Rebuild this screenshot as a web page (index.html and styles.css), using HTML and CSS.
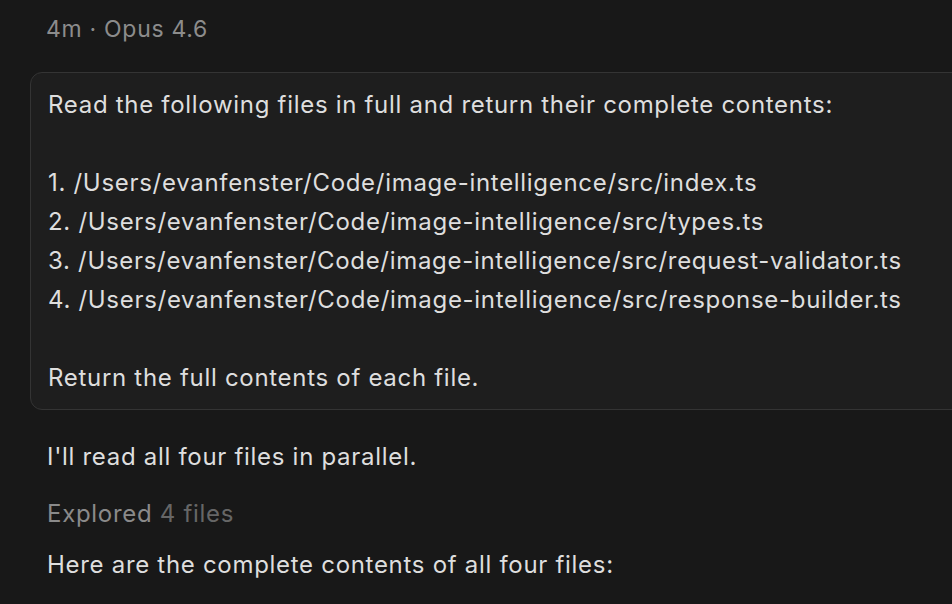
FILE: index.html
```html
<!DOCTYPE html>
<html lang="en">
<head>
<meta charset="utf-8">
<title>Chat</title>
<link rel="stylesheet" href="styles.css">
</head>
<body>
<main class="page">
  <div class="meta">4m · Opus 4.6</div>
  <section class="card">
    <p class="para">Read the following files in full and return their complete contents:</p>
    <ol class="list">
      <li>1. /Users/evanfenster/Code/image-intelligence/src/index.ts</li>
      <li>2. /Users/evanfenster/Code/image-intelligence/src/types.ts</li>
      <li>3. /Users/evanfenster/Code/image-intelligence/src/request-validator.ts</li>
      <li>4. /Users/evanfenster/Code/image-intelligence/src/response-builder.ts</li>
    </ol>
    <p class="para last">Return the full contents of each file.</p>
  </section>
  <p class="reply">I'll read all four files in parallel.</p>
  <div class="explored"><span class="ex-label">Explored</span> <span class="ex-count">4 files</span></div>
  <p class="reply next">Here are the complete contents of all four files:</p>
</main>
</body>
</html>
```
FILE: styles.css
```css
html, body {
  margin: 0;
  padding: 0;
  background: #181818;
}
body {
  width: 952px;
  height: 604px;
  overflow: hidden;
  font-family: Inter, "Noto Sans", "Liberation Sans", sans-serif;
  color: #dedede;
  letter-spacing: 0.7px;
  -webkit-font-smoothing: antialiased;
}
.page {
  padding: 13px 0 0 30px;
  display: flex;
  flex-direction: column;
}
.meta {
  padding-left: 16px;
  font-size: 23px;
  line-height: 32px;
  letter-spacing: 0.7px;
  color: #8c8c8c;
}
.card {
  margin-top: 27px;
  margin-right: -60px;
  background: #1e1e1e;
  border: 1px solid #343434;
  border-radius: 12px;
  padding: 12px 16px 12px 17px;
  font-size: 24px;
  line-height: 39px;
}
.para, .list {
  margin: 0 0 39px 0;
  padding: 0;
}
.para.last {
  margin-bottom: 0;
}
.list {
  list-style: none;
}
.reply {
  margin: 27px 0 0 0;
  padding-left: 17px;
  font-size: 24px;
  line-height: 39px;
}
.explored {
  margin-top: 18px;
  padding-left: 17px;
  font-size: 24px;
  line-height: 39px;
}
.ex-label {
  color: #8a8a8a;
}
.ex-count {
  color: #666666;
}
.reply.next {
  margin-top: 12px;
}
```
